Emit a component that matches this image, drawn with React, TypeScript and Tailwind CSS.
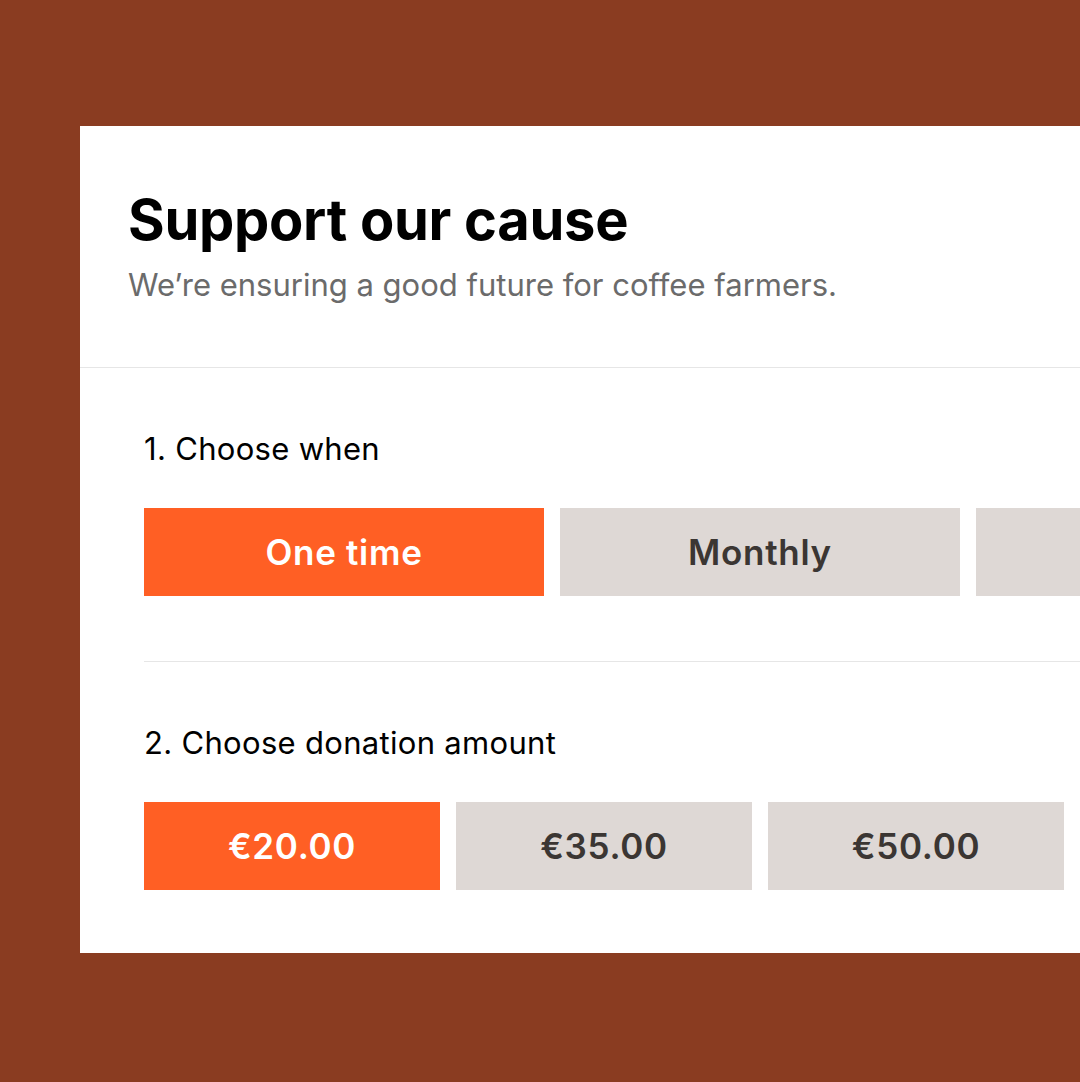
const whenOptions = ['One time', 'Monthly', 'Yearly'];
const amountOptions = ['€20.00', '€35.00', '€50.00', '€100.00'];

interface OptionButtonProps {
  label: string;
  active?: boolean;
}

const OptionButton = ({label, active}: OptionButtonProps) => {
  return (
      <button
          className={
            active
                ? 'h-[88px] bg-[#ff5f24] text-white text-[35px] font-semibold tracking-[0.02em]'
                : 'h-[88px] bg-[#ded8d5] text-[#3b3633] text-[35px] font-semibold tracking-[0.02em]'
          }
      >
        {label}
      </button>
  );
};

export default function App() {
  return (
      <div
          className="h-[1082px] w-[1080px] overflow-hidden bg-[#8a3c21] pt-[126px] pl-[80px]"
          style={{fontFamily: 'Inter, "Noto Sans", sans-serif'}}
      >
        <div className="w-[1360px] bg-white">
          <header className="px-[48px] pt-[61px] pb-[62px] border-b border-[#e6e6e6]">
            <h1 className="text-[56px] leading-[1.2] font-bold text-black tracking-[-0.005em]">
              Support our cause
            </h1>
            <p className="mt-[11px] text-[31px] leading-[40px] text-[#6b6b6b]">
              We’re ensuring a good future for coffee farmers.
            </p>
          </header>

          <section className="px-[64px] pt-[63px] pb-[65px]">
            <h2 className="text-[31px] leading-[36px] text-black tracking-[0.01em]">1. Choose when</h2>
            <div className="mt-[41px] grid grid-cols-3 gap-4">
              {whenOptions.map((o, i) => (
                  <OptionButton key={o} label={o} active={i === 0}/>
              ))}
            </div>
          </section>

          <div className="mx-[64px] h-px bg-[#e6e6e6]"/>

          <section className="px-[64px] pt-[63px] pb-[63px]">
            <h2 className="text-[31px] leading-[36px] text-black tracking-[0.01em]">2. Choose donation amount</h2>
            <div className="mt-[41px] grid grid-cols-4 gap-4">
              {amountOptions.map((o, i) => (
                  <OptionButton key={o} label={o} active={i === 0}/>
              ))}
            </div>
          </section>
        </div>
      </div>
  );
}
